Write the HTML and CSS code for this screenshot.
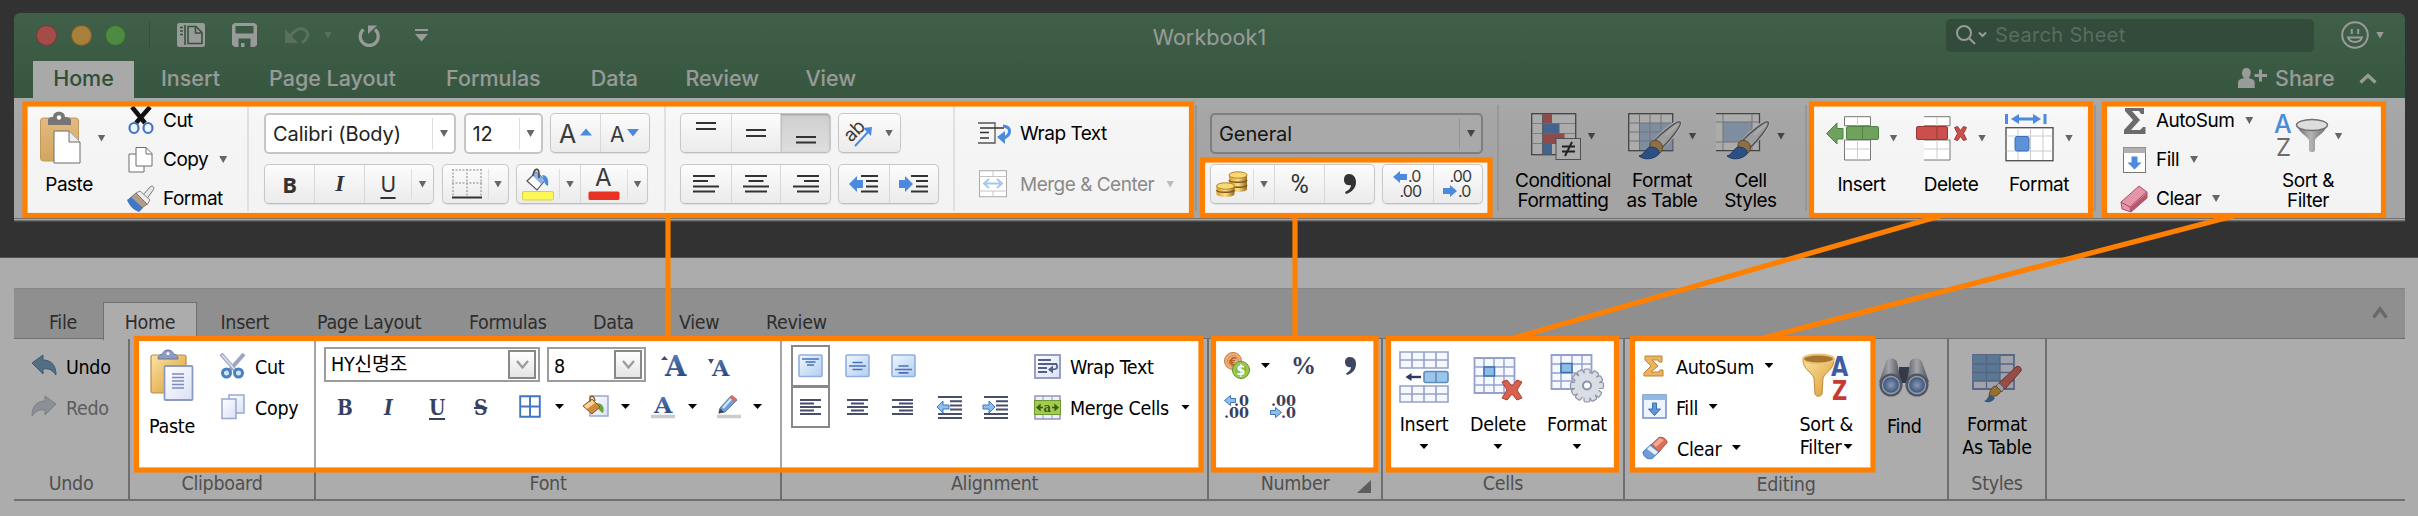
FILE: index.html
```html
<!DOCTYPE html>
<html lang="en">
<head>
<meta charset="utf-8">
<title>Workbook1</title>
<link rel="stylesheet" href="styles.css">
</head>
<body>
<svg class="defs" width="0" height="0" aria-hidden="true">
  <defs>
    <linearGradient id="tan" x1="0" y1="0" x2="0" y2="1"><stop offset="0" stop-color="#e3bb7e"/><stop offset="1" stop-color="#d2a560"/></linearGradient>
    <linearGradient id="gold" x1="0" y1="0" x2="1" y2="1"><stop offset="0" stop-color="#fbe3a0"/><stop offset="1" stop-color="#d99a32"/></linearGradient>
    <linearGradient id="coin" x1="0" y1="0" x2="1" y2="0"><stop offset="0" stop-color="#d79c28"/><stop offset=".5" stop-color="#fbe08a"/><stop offset="1" stop-color="#9c6a1c"/></linearGradient>
    <linearGradient id="sheet" x1="0" y1="0" x2="1" y2="1"><stop offset="0" stop-color="#ffffff"/><stop offset="1" stop-color="#d9e1f5"/></linearGradient>
    <linearGradient id="skyblue" x1="0" y1="0" x2="1" y2="1"><stop offset="0" stop-color="#eef6ff"/><stop offset="1" stop-color="#b3cff0"/></linearGradient>
    <linearGradient id="metal" x1="0" y1="0" x2="1" y2="0"><stop offset="0" stop-color="#8b8f9c"/><stop offset=".45" stop-color="#f3f5fa"/><stop offset="1" stop-color="#6c7186"/></linearGradient>
    <linearGradient id="funnel" x1="0" y1="0" x2="1" y2="0"><stop offset="0" stop-color="#6b6b6b"/><stop offset=".45" stop-color="#b4b4b4"/><stop offset="1" stop-color="#6b6b6b"/></linearGradient>
    <linearGradient id="navyA" x1="0" y1="0" x2="0" y2="1"><stop offset="0" stop-color="#5d86bd"/><stop offset="1" stop-color="#233e75"/></linearGradient>
    <radialGradient id="lens"><stop offset="0" stop-color="#cfe2ff"/><stop offset="1" stop-color="#4d78c0"/></radialGradient>
    <symbol id="brush" viewBox="0 0 44 40">
      <path d="M42 2C45 5 30 22 25 26L18 20C24 13 39 0 42 2Z" fill="#e8e8e8" stroke="#fff" stroke-width="4"/>
      <path d="M42 2C45 5 30 22 25 27L17 20C24 13 39 0 42 2Z" fill="#e9e9e9" stroke="#777" stroke-width="1.3"/>
      <path d="M28 15L40 4" stroke="#fff" stroke-width="2"/>
      <path d="M12 28C11 22 15 19 20 21C25 23 26 29 22 33Z" fill="#d2a566" stroke="#8c6a35"/>
      <path d="M1 36C6 35 8 28 12 27C18 27 22 30 21 34C15 40 6 40 1 36Z" fill="#4476c4" stroke="#2c5595"/>
    </symbol>
    <g id="teeth"><rect x="-3" y="-16.500" width="6" height="33" rx="1.500"/><rect x="-16.500" y="-3" width="33" height="6" rx="1.500"/></g>
  </defs>
</svg>

<section class="mac-stage">
  <div class="mac-window">
    <header class="mac-title">
      <div class="mac-title-left">
        <span class="light red"></span><span class="light amber"></span><span class="light green"></span>
        <span class="title-rule"></span>
        <svg width="28" height="24" viewBox="0 0 28 24"><rect width="28" height="24" rx="2.500" fill="#e2e6e3"/><path d="M8 2v20" stroke="#4f7d5c" stroke-width="1.600"/><path d="M3 4.500h3M3 8h3M3 11.500h3" stroke="#4f7d5c" stroke-width="1.600"/><path d="M11 3.500h8l6 6v11h-14z" fill="none" stroke="#4f7d5c" stroke-width="1.600"/><path d="M18.500 4v6h6" fill="none" stroke="#4f7d5c" stroke-width="1.600"/></svg>
        <svg width="25" height="24" viewBox="0 0 25 24"><path d="M2.500 0h20L25 2v20l-2.500 2h-20L0 21.500V2z" fill="#e2e6e3"/><path d="M3.500 3h18v7.500h-18z" fill="#588564"/><path d="M6.500 24v-8.500h12V24z" fill="#588564"/><path d="M9 24v-4h3.500v4z" fill="#e2e6e3"/></svg>
        <svg width="26" height="18" viewBox="0 0 26 18"><path d="M5 12C10 4 16 1 21 4C27 8 22 14 18 17" fill="none" stroke="#84a58f" stroke-width="3"/><path d="M1 3v14h13z" fill="#84a58f"/></svg>
        <i class="mtri faded"></i>
        <svg width="22" height="23" viewBox="0 0 22 23"><path d="M5.500 5.500A9 9 0 1 0 17 5.500" fill="none" stroke="#e2e6e3" stroke-width="3.200"/><path d="M10 10V1.500h9z" fill="#e2e6e3"/></svg>
        <svg width="13" height="13" viewBox="0 0 13 13"><path d="M0 1h13" stroke="#e2e6e3" stroke-width="2"/><path d="M0 5h13L6.500 12.500z" fill="#e2e6e3"/></svg>
      </div>
      <div class="mac-title-text">Workbook1</div>
      <div class="mac-title-right">
        <div class="search">
          <svg width="30" height="20" viewBox="0 0 30 20"><circle cx="8" cy="8" r="7" fill="none" stroke="#e2e6e3" stroke-width="2"/><path d="M13 13l6 6M23 7.500l3.500 3.500L30 7.500" fill="none" stroke="#e2e6e3" stroke-width="2"/></svg>
          <span>Search Sheet</span>
        </div>
        <svg width="28" height="28" viewBox="0 0 28 28" fill="none" stroke="#e2e6e3" stroke-width="2"><circle cx="14" cy="14" r="12.800"/><path d="M10.800 8v5M17.200 8v5M7 16.500c2 6 12 6 14 0z"/></svg>
        <i class="mtri pale"></i>
      </div>
    </header>
    <nav class="mac-tabs">
      <div class="mac-tab-list">
        <a class="active">Home</a><a>Insert</a><a>Page Layout</a><a>Formulas</a><a>Data</a><a>Review</a><a>View</a>
      </div>
      <div class="mac-share">
        <svg width="29" height="20" viewBox="0 0 29 20"><path d="M8.500 0c3 0 4.500 2 4.200 5c-.2 2-1 4-2 5c4 1 6 2 6 5v5H0v-5c0-3 2-4 6-5c-1-1-2-3-2-5C3.900 2 5.500 0 8.500 0z" fill="#e2e6e3"/><path d="M22.500 1.500v12M16.500 7.500h12.500" stroke="#e2e6e3" stroke-width="3"/></svg>
        <span>Share</span>
        <svg width="18" height="11" viewBox="0 0 18 11"><path d="M1.500 9.500L9 2.500l7.500 7" fill="none" stroke="#e2e6e3" stroke-width="3.200"/></svg>
      </div>
    </nav>

    <div class="mac-ribbon">
      <div class="mg mg-clip">
        <div class="big paste">
          <div class="pic"><svg width="41" height="52" viewBox="0 0 41 52"><rect x=".5" y="6" width="38" height="43" rx="3" fill="url(#tan)" stroke="#c3985a"/><path d="M8 13V8c0-2 2-3 5-3c0-7 12-7 12 0c3 0 6 1 6 3v5z" fill="#767676"/><circle cx="19" cy="5.500" r="2.200" fill="#fff"/><path d="M14 19h15l11 11v21H14z" fill="#fff" stroke="#6d6d6d"/><path d="M29 19v11h11" fill="#eee" stroke="#6d6d6d"/></svg><i class="mtri"></i></div>
          <span>Paste</span>
        </div>
        <div class="stack">
          <div class="line"><svg width="26" height="28" viewBox="0 0 26 28"><path d="M4 0l13 16M22 0L8 16" stroke="#111" stroke-width="4.500"/><ellipse cx="6" cy="21" rx="4.500" ry="5" fill="none" stroke="#3d76c8" stroke-width="2.200"/><ellipse cx="20" cy="21" rx="4.500" ry="5" fill="none" stroke="#3d76c8" stroke-width="2.200"/></svg><span>Cut</span></div>
          <div class="line"><svg width="26" height="26" viewBox="0 0 26 26"><path d="M1 7h9l6 6v12H1z" fill="#fff" stroke="#6d6d6d"/><path d="M8 .5h10l6 6V19H8z" fill="#fff" stroke="#6d6d6d"/><path d="M18 .5v6.500h6" fill="none" stroke="#6d6d6d"/></svg><span>Copy</span><i class="mtri"></i></div>
          <div class="line"><svg width="28" height="26" viewBox="0 0 28 26"><path d="M15 10L23 1c2-2 5 0 3.500 2.500L19 14z" fill="#e6e6e6" stroke="#777"/><path d="M9 7l4-2 10 9-3 5z" fill="#ececec" stroke="#888"/><path d="M3 12l6-5 11 11-5 4z" fill="#b39c88" stroke="#8a7361"/><path d="M0 14l4-3 12 11-4 4C6 24 2 19 0 14z" fill="#3f78c6"/></svg><span>Format</span></div>
        </div>
      </div>

      <div class="mg mg-font two">
        <div class="mrow font-a">
          <div class="combo"><span>Calibri (Body)</span><b></b><i class="mtri"></i></div>
          <div class="combo"><span>12</span><b></b><i class="mtri"></i></div>
          <div class="seg seg-size">
            <div><svg width="34" height="26" viewBox="0 0 34 26"><text class="ic" x="0" y="23" font-size="25">A</text><path d="M21 15.500l6-7 6 7z" fill="#4b8ade"/></svg></div>
            <div><svg width="30" height="26" viewBox="0 0 30 26"><text class="ic" x="0" y="22" font-size="21">A</text><path d="M17 9h12l-6 7.500z" fill="#4b8ade"/></svg></div>
          </div>
        </div>
        <div class="mrow font-b">
          <div class="seg seg-biu">
            <div class="g-b">B</div><div class="g-i">I</div><div class="g-u">U</div><div class="drop"><i class="mtri"></i></div>
          </div>
          <div class="seg seg-border">
            <div><svg width="30" height="30" viewBox="0 0 30 30"><path d="M1 0v27M29 0v27M15 0v27M0 1h30M0 14h30" stroke="#aaa" stroke-width="1.500" stroke-dasharray="2 1.500" fill="none"/><path d="M0 28.500h30" stroke="#333" stroke-width="2"/></svg></div>
            <div class="drop"><i class="mtri"></i></div>
          </div>
          <div class="seg seg-fill">
            <div><svg width="32" height="34" viewBox="0 0 32 34"><path d="M5 14L14 5l9 8-8 10z" fill="#fff" stroke="#555" stroke-width="1.200"/><path d="M10 8l9 9 4-4-9-8z" fill="#8ab2e8"/><path d="M11 9c1-8 6-9 6-2v4" fill="none" stroke="#444" stroke-width="1.600"/><path d="M20 8c5 0 7 4 6 11c-3-1-4-4-4-7z" fill="#4b8ade"/><rect x=".5" y="24.500" width="31" height="8.500" rx="1.500" fill="#fbf757" stroke="#d8d23c"/></svg></div>
            <div class="drop"><i class="mtri"></i></div>
            <div><svg width="32" height="34" viewBox="0 0 32 34"><text class="ic" x="7" y="19" font-size="24">A</text><rect x=".5" y="24.500" width="31" height="8.500" rx="1.500" fill="#e83323"/></svg></div>
            <div class="drop"><i class="mtri"></i></div>
          </div>
        </div>
      </div>

      <div class="mg mg-align two">
        <div class="mrow">
          <div class="seg seg-3">
            <div><svg width="22" height="26" viewBox="0 0 22 26"><path d="M1 3h20M1 9h20" stroke="#333" stroke-width="2"/></svg></div>
            <div><svg width="22" height="26" viewBox="0 0 22 26"><path d="M1 10h20M1 16h20" stroke="#333" stroke-width="2"/></svg></div>
            <div class="on"><svg width="22" height="26" viewBox="0 0 22 26"><path d="M1 17h20M1 22.500h20" stroke="#333" stroke-width="2"/></svg></div>
          </div>
          <div class="seg seg-ab">
            <div><svg width="32" height="28" viewBox="0 0 32 28"><text class="ic" x="0" y="0" font-size="19" transform="translate(8 24) rotate(-45)">ab</text><path d="M12 27L25 13" stroke="#4b8ade" stroke-width="2"/><path d="M20 9l9-1-1 9z" fill="#4b8ade"/></svg></div>
            <div class="drop"><i class="mtri"></i></div>
          </div>
        </div>
        <div class="mrow">
          <div class="seg seg-3">
            <div><svg width="26" height="18" viewBox="0 0 26 18"><path d="M0 1h22M0 6h15M0 11.500h26M0 16.500h22" stroke="#333" stroke-width="2"/></svg></div>
            <div><svg width="26" height="18" viewBox="0 0 26 18"><path d="M2 1h22M5.500 6h15M0 11.500h26M2 16.500h22" stroke="#333" stroke-width="2"/></svg></div>
            <div><svg width="26" height="18" viewBox="0 0 26 18"><path d="M4 1h22M11 6h15M0 11.500h26M4 16.500h22" stroke="#333" stroke-width="2"/></svg></div>
          </div>
          <div class="seg seg-indent">
            <div><svg width="30" height="18" viewBox="0 0 30 18"><path d="M12 1h17M17 6h12M17 11.500h12M12 16.500h17" stroke="#333" stroke-width="2"/><path d="M0 9l8-8v4h6v8H8v4z" fill="#4b8ade"/></svg></div>
            <div><svg width="30" height="18" viewBox="0 0 30 18"><path d="M12 1h17M17 6h12M17 11.500h12M12 16.500h17" stroke="#333" stroke-width="2"/><path d="M14 9L6 1v4H0v8h6v4z" fill="#4b8ade"/></svg></div>
          </div>
        </div>
      </div>

      <div class="mg mg-wrap two">
        <div class="mrow text-row"><svg width="34" height="22" viewBox="0 0 34 22"><path d="M0 1h17v20H0" fill="none" stroke="#555" stroke-width="1.300"/><path d="M2 6h24M2 10.500h9M2 16h9" stroke="#333" stroke-width="1.500"/><path d="M25 4c9 1 8 9 1 12" fill="none" stroke="#4b8ade" stroke-width="3"/><path d="M19 15l8-6v13z" fill="#4b8ade"/></svg><span>Wrap Text</span></div>
        <div class="mrow text-row off"><svg width="34" height="28" viewBox="0 0 34 28"><rect x="1.500" y=".7" width="27" height="26" fill="#fff" stroke="#aaa"/><path d="M1 6.500h28M1 21h28M15 1v5M15 21v6" stroke="#c4c4c4"/><path d="M8 13.500h14M11 9l-5 4.500 5 4.500M19 9l5 4.500-5 4.500" fill="none" stroke="#a9c6ec" stroke-width="2"/></svg><span>Merge &amp; Center</span><i class="mtri light-tri"></i></div>
      </div>

      <div class="mg mg-num two">
        <div class="mrow"><div class="combo wide"><span>General</span><b></b><i class="mtri"></i></div></div>
        <div class="mrow">
          <div class="seg seg-coin">
            <div><svg width="32" height="27" viewBox="0 0 32 27"><path d="M13 4v14c0 4 18 4 18 0V4z" fill="url(#coin)"/><path d="M13 9c0 3 18 3 18 0M13 14c0 3 18 3 18 0" fill="none" stroke="#7a5416" stroke-width="1.300"/><ellipse cx="22" cy="4" rx="9" ry="3.200" fill="#f7da77" stroke="#b58526"/><path d="M.5 15v8c0 4 18 4 18 0v-8z" fill="url(#coin)"/><path d="M.5 19c0 3 18 3 18 0" fill="none" stroke="#7a5416" stroke-width="1.300"/><ellipse cx="9.500" cy="15" rx="9" ry="3.200" fill="#f7da77" stroke="#b58526"/></svg></div>
            <div class="drop"><i class="mtri"></i></div>
            <div class="pct">%</div>
            <div><svg width="12" height="20" viewBox="0 0 12 20"><path d="M5 0c4 0 7 3 7 8c0 6-4 10-10 12l-1-2c4-2 6-4 6-7C2 12 0 9 0 6C0 2 2 0 5 0z" fill="#333"/></svg></div>
          </div>
          <div class="seg seg-dec">
            <div><svg width="30" height="28" viewBox="0 0 30 28"><text class="ic dec" x="15" y="12">.0</text><text class="ic dec" x="6.500" y="27">.00</text><path d="M0 7l7-6v3h7v6H7v3z" fill="#4b8ade"/></svg></div>
            <div><svg width="30" height="28" viewBox="0 0 30 28"><text class="ic dec" x="6.500" y="12">.00</text><text class="ic dec" x="15" y="27">.0</text><path d="M14 21l-7-6v3H0v6h7v3z" fill="#4b8ade"/></svg></div>
          </div>
        </div>
      </div>

      <div class="mg mg-styles">
        <div class="big w114">
          <div class="pic"><svg width="50" height="47" viewBox="0 0 50 47"><rect x=".7" y=".7" width="44" height="41" fill="#fff" stroke="#666" stroke-width="1.300"/><path d="M1 10.500h43M1 20.500h43M1 30.500h43" stroke="#bbb"/><path d="M11.500 1h9.500v9.500h-9.500zM11.500 20.500h22v10.500h-22z" fill="#d4706e"/><path d="M11.500 10.500h17v10h-17zM11.500 31h9.500v10.500h-9.500z" fill="#6795d2"/><path d="M11.500 1v41" stroke="#888"/><rect x="25" y="25.500" width="24.500" height="21" fill="#fff" stroke="#777"/><path d="M31 33.500h13M31 38.500h13M41 29l-7 14" stroke="#333" stroke-width="2"/></svg><i class="mtri"></i></div>
          <span>Conditional<br>Formatting</span>
        </div>
        <div class="big w84">
          <div class="pic"><svg width="54" height="47" viewBox="0 0 54 47"><rect x=".7" y=".7" width="44" height="37" fill="#fff" stroke="#666" stroke-width="1.300"/><rect x="11.500" y="10" width="33" height="27" fill="#bcd2ef"/><path d="M1 10h43M1 19h43M1 28h43M11.500 1v36M22 1v36M33 1v36" stroke="#aaa"/><use href="#brush" x="10" y="7" width="44" height="40"/></svg><i class="mtri"></i></div>
          <span>Format<br>as Table</span>
        </div>
        <div class="big w93">
          <div class="pic"><svg width="54" height="47" viewBox="0 0 54 47"><path d="M0 .7h43.500v37H0" fill="#fff" stroke="#666" stroke-width="1.300"/><rect x="7" y="9" width="29" height="20" fill="#bcd2ef"/><path d="M0 9h43M0 29h43M7 1v36M36 1v36" stroke="#aaa"/><use href="#brush" x="10" y="7" width="44" height="40"/></svg><i class="mtri"></i></div>
          <span>Cell<br>Styles</span>
        </div>
      </div>

      <div class="mg mg-cells">
        <div class="big w83">
          <div class="pic g11"><svg width="53" height="45" viewBox="0 0 53 45"><path d="M18.500.7h26v9h-26zM18.500 24h26v20h-26z" fill="#fff" stroke="#777"/><path d="M31.500 1v9M31.500 24v20M18.500 33h26" stroke="#ccc"/><rect x="20.500" y="10.500" width="32" height="13" rx="1.500" fill="#6fa35d" stroke="#4e8240"/><path d="M36.500 11v12" stroke="#4e8240"/><path d="M.5 17.500L11 7v5.500h6v10.500h-6V28z" fill="#6fa35d" stroke="#4e8240"/></svg><i class="mtri"></i></div>
          <span>Insert</span>
        </div>
        <div class="big w96">
          <div class="pic g11"><svg width="51" height="45" viewBox="0 0 51 45"><path d="M8 .7h26v9H8M8 24h26v20H8" fill="#fff" stroke="#777"/><path d="M21 1v9M21 24v20M8 33h26" stroke="#ccc"/><rect x=".5" y="10.500" width="31" height="13" rx="1.500" fill="#c9504d" stroke="#9f3532"/><path d="M21 11v12" stroke="#9f3532"/><path d="M38.500 11.500l3-1 3 4 3-4 3 1-3 6 3 6-3 1-3-4-3 4-3-1 3-6z" fill="#c9504d" stroke="#9f3532"/></svg><i class="mtri"></i></div>
          <span>Delete</span>
        </div>
        <div class="big w80">
          <div class="pic g11"><svg width="49" height="48" viewBox="0 0 49 48"><path d="M1.500 0v10M40 0v10" stroke="#4b8ade" stroke-width="3"/><path d="M6 5l8-5v3.500h14V0l8 5-8 5V6.500H14V10z" fill="#4b8ade"/><rect x="1" y="13.700" width="47" height="33" fill="#fff" stroke="#555" stroke-width="1.400"/><path d="M1.500 22h46M1.500 37h46M13 14v32M25.500 14v32M38 14v32" stroke="#ccc"/><rect x="10" y="22.500" width="14" height="14.500" rx="2" fill="#5b92d8" stroke="#3a6fb8"/></svg><i class="mtri"></i></div>
          <span>Format</span>
        </div>
      </div>

      <div class="mg mg-edit">
        <div class="stack">
          <div class="line"><svg width="26" height="28" viewBox="0 0 26 28"><path d="M4 1h19v6h-3l-2-3h-7l8 9-9 10h9l3-3h2.500v7H3v-4l9-10L4 4z" fill="#6b6b6b"/></svg><span>AutoSum</span><i class="mtri"></i></div>
          <div class="line"><svg width="26" height="26" viewBox="0 0 26 26"><rect x="2.500" y=".5" width="22" height="25" fill="#fff" stroke="#777"/><path d="M2.500.5h22v5.500h-22z" fill="#b0b0b0"/><path d="M10.500 9.500h6v6h4l-7 7-7-7h4z" fill="#4b8ade"/></svg><span>Fill</span><i class="mtri"></i></div>
          <div class="line"><svg width="28" height="28" viewBox="0 0 28 28"><path d="M19 1l8 6v6L11 27 2 24l-1-7z" fill="#e595a8" stroke="#a9506a"/><path d="M1 17l9 5 16.500-15M10 22l1 5" fill="none" stroke="#a9506a"/><path d="M11 22L27 8v5L11 27z" fill="#b5566f"/></svg><span>Clear</span><i class="mtri"></i></div>
        </div>
        <div class="big sort">
          <div class="pic"><svg width="54" height="44" viewBox="0 0 54 44"><text x="0" y="19" font-size="25" font-weight="500" fill="#4b8ade" font-family="Inter">A</text><text x="2" y="42" font-size="24" fill="#6b6b6b" font-family="Inter">Z</text><path d="M23 11c2 8 9 10 12 15v10c0 3 6 3 6 0V26c3-5 10-7 12-15z" fill="url(#funnel)"/><ellipse cx="38" cy="11" rx="15.500" ry="5.500" fill="#ddd" stroke="#707070" stroke-width="1.500"/></svg><i class="mtri"></i></div>
          <span>Sort &amp;<br>Filter</span>
        </div>
      </div>
    </div>
  </div>
</section>

<section class="win-stage">
  <nav class="win-tabs">
    <div class="win-tab-list"><a>File</a><a class="active">Home</a><a>Insert</a><a>Page Layout</a><a>Formulas</a><a>Data</a><a>View</a><a>Review</a></div>
    <svg width="16" height="13" viewBox="0 0 16 13"><path d="M1.500 11.500L8 3l6.500 8.500" fill="none" stroke="#9c9c9c" stroke-width="3.500"/></svg>
  </nav>
  <div class="win-ribbon">
    <div class="wg wg-undo">
      <div class="wbody"><div class="wstack">
        <div class="wline"><svg width="26" height="21" viewBox="0 0 26 21"><path d="M1 8L12 0v5c8 0 13 5 13 15c-4-5-7-7-13-6v5z" fill="#79a3c4" stroke="#5b86aa"/></svg><span>Undo</span></div>
        <div class="wline off"><svg width="26" height="21" viewBox="0 0 26 21"><path d="M25 8L14 0v5C6 5 1 10 1 20c4-5 7-7 13-6v5z" fill="#cdd6de" stroke="#b2bfca"/></svg><span>Redo</span></div>
      </div></div>
      <div class="wlabel">Undo</div>
    </div>

    <div class="wg wg-clip">
      <div class="wbody">
        <div class="wbig">
          <div class="wpic"><svg width="44" height="52" viewBox="0 0 44 52"><rect x="1" y="5" width="35" height="38" rx="2" fill="url(#gold)" stroke="#b98a4a" stroke-width="1.200"/><path d="M8 9C8 4 12 5 13 3c1-4 9-4 10 0c1 2 5 1 5 6z" fill="#8c9cc4" stroke="#66759e"/><circle cx="18" cy="3.500" r="1.500" fill="#fff"/><rect x="14.500" y="16" width="28" height="34" rx="1" fill="url(#sheet)" stroke="#8c9ac8" stroke-width="1.800"/><path d="M22 24h12M22 27.500h12M22 31h12M22 34.500h12M22 38h12" stroke="#7d8cba" stroke-width="1.500"/></svg></div>
          <span class="single">Paste</span>
        </div>
        <div class="wstack">
          <div class="wline"><svg width="26" height="26" viewBox="0 0 26 26"><path d="M1 1l15 17M24 1L9 18" stroke="#9aa6c2" stroke-width="4"/><path d="M2 2l14 16" stroke="#e4e9f4" stroke-width="1.300"/><circle cx="6.500" cy="20" r="4" fill="#cfe3f8" stroke="#4a7fc0" stroke-width="3"/><circle cx="18.500" cy="20" r="4" fill="#cfe3f8" stroke="#4a7fc0" stroke-width="3"/></svg><span>Cut</span></div>
          <div class="wline"><svg width="26" height="26" viewBox="0 0 26 26"><rect x="9" y="1" width="15" height="18" fill="url(#sheet)" stroke="#9aa7d0" stroke-width="1.500"/><rect x="2" y="5" width="14" height="19.500" fill="url(#sheet)" stroke="#9aa7d0" stroke-width="1.500"/></svg><span>Copy</span></div>
        </div>
      </div>
      <div class="wlabel">Clipboard</div>
    </div>

    <div class="wg wg-font">
      <div class="wrows">
        <div class="wrow wfont-a">
          <div class="wcombo"><span class="kr">HY신명조</span><b><svg width="13" height="9" viewBox="0 0 13 9"><path d="M1 1l5.500 6.500L12 1" fill="none" stroke="#999" stroke-width="2.200"/></svg></b></div>
          <div class="wcombo"><span>8</span><b><svg width="13" height="9" viewBox="0 0 13 9"><path d="M1 1l5.500 6.500L12 1" fill="none" stroke="#999" stroke-width="2.200"/></svg></b></div>
          <svg width="26" height="24" viewBox="0 0 26 24"><text class="serif" x="4" y="21.500" font-size="27" textLength="21" lengthAdjust="spacingAndGlyphs" fill="url(#navyA)">A</text><path d="M0 6l3.500-4L7 6z" fill="#444c66"/></svg>
          <svg width="26" height="24" viewBox="0 0 26 24"><text class="serif" x="4" y="21.500" font-size="23" textLength="17" lengthAdjust="spacingAndGlyphs" fill="url(#navyA)">A</text><path d="M0 5h6l-3 5z" fill="#444c66"/></svg>
        </div>
        <div class="wrow wfont-b">
          <span class="sg">B</span><span class="sg it">I</span><span class="sg un">U</span><span class="sg st">S</span>
          <svg width="22" height="23" viewBox="0 0 22 23"><path d="M1.200 1.200h19.600v20.600H1.200zM11 1v21M1 11.500h20" fill="none" stroke="#3f76c4" stroke-width="1.900"/></svg>
          <i class="wtri"></i>
          <svg width="26" height="24" viewBox="0 0 26 24"><rect x="7" y="1" width="18" height="20" fill="url(#sheet)" stroke="#9aa7d0" stroke-width="1.500"/><path d="M13 8c7 0 9 5 7 10c-3-1-4-4-6-6z" fill="#6da33d"/><path d="M0 11L9 4l8 8-8 7z" fill="#d08a3c" stroke="#8a5a2a"/><path d="M1 11l8-6 3 3-8 6z" fill="#f6d798"/><path d="M7 7c-1-7 4-8 5-1" fill="none" stroke="#8a5a2a" stroke-width="1.400"/></svg>
          <i class="wtri"></i>
          <svg width="24" height="24" viewBox="0 0 24 24"><text class="serif" x="3" y="18" font-size="23" textLength="18" lengthAdjust="spacingAndGlyphs" fill="url(#navyA)">A</text><path d="M0 21.500h24" stroke="#ccc" stroke-width="3.500"/></svg>
          <i class="wtri"></i>
          <svg width="24" height="24" viewBox="0 0 24 24"><path d="M0 21.500h24" stroke="#ccc" stroke-width="3.500"/><path d="M3 13L14 1l6 4L8 17l-6 1z" fill="#6f9fd8" stroke="#5877a6"/><path d="M12.500 2.500L15 0l5 4-2 3z" fill="#e06a5c"/><path d="M1.500 18.500l1.500-5 4 3.500z" fill="#444"/><path d="M6 13l8-9" stroke="#d7e7fb" stroke-width="2"/></svg>
          <i class="wtri"></i>
        </div>
      </div>
      <div class="wlabel">Font</div>
    </div>

    <div class="wg wg-align">
      <div class="wrows">
        <div class="wrow walign-a">
          <div class="tog"><svg width="25" height="24" viewBox="0 0 25 24"><rect x="1" y="1" width="23" height="21.500" rx="1" fill="url(#skyblue)" stroke="#8fb0e0" stroke-width="1.600"/><path d="M4 5h17M7.500 8h10M9 11h7" stroke="#4872b8" stroke-width="1.700"/></svg></div>
          <svg width="25" height="24" viewBox="0 0 25 24"><rect x="1" y="1" width="23" height="21.500" rx="1" fill="url(#skyblue)" stroke="#8fb0e0" stroke-width="1.600"/><path d="M7.500 8.500h10M4 12h17M7.500 15.500h10" stroke="#4872b8" stroke-width="1.700"/></svg>
          <svg width="25" height="24" viewBox="0 0 25 24"><rect x="1" y="1" width="23" height="21.500" rx="1" fill="url(#skyblue)" stroke="#8fb0e0" stroke-width="1.600"/><path d="M7.500 12h10M4 15.500h17M7.500 18.800h10" stroke="#4872b8" stroke-width="1.700"/></svg>
          <svg width="27" height="25" viewBox="0 0 27 25"><rect x="1" y="1" width="25" height="23" fill="url(#sheet)" stroke="#8c96bd" stroke-width="1.800"/><path d="M4 6h13M4 10h19M4 14h9M4 18h9" stroke="#535f88" stroke-width="1.800"/><path d="M22.500 10c2 5-1 5.500-5 5.500" fill="none" stroke="#535f88" stroke-width="1.800"/><path d="M19 11.500v8l-5-4z" fill="#535f88"/></svg>
          <span>Wrap Text</span>
        </div>
        <div class="wrow walign-b">
          <div class="tog"><svg width="21" height="18" viewBox="0 0 21 18" stroke="#474f6a" stroke-width="2"><path d="M0 2h21M0 5.500h14M0 9h21M0 12.500h14M0 16h21"/></svg></div>
          <svg width="21" height="18" viewBox="0 0 21 18" stroke="#474f6a" stroke-width="2"><path d="M0 2h21M4 5.500h13M0 9h21M4 12.500h13M0 16h21"/></svg>
          <svg width="21" height="18" viewBox="0 0 21 18" stroke="#474f6a" stroke-width="2"><path d="M0 2h21M7 5.500h14M0 9h21M7 12.500h14M0 16h21"/></svg>
          <svg width="26" height="25" viewBox="0 0 26 25"><path d="M1 2h24M13 6.200h12M13 10.400h12M13 14.600h12M1 19h24M1 23h24" stroke="#474f6a" stroke-width="2"/><path d="M0 12l6-6v4h6v4H6v4z" fill="#8ec0ee" stroke="#3f76b8"/></svg>
          <svg width="26" height="25" viewBox="0 0 26 25"><path d="M1 2h24M13 6.200h12M13 10.400h12M13 14.600h12M1 19h24M1 23h24" stroke="#474f6a" stroke-width="2"/><path d="M12 12L6 6v4H0v4h6v4z" fill="#8ec0ee" stroke="#3f76b8"/></svg>
          <svg width="27" height="25" viewBox="0 0 27 25"><rect x="1" y="1" width="25" height="23" fill="#eef1fa" stroke="#8c96bd" stroke-width="1.500"/><path d="M9 1v23M18 1v23" stroke="#8c96bd"/><rect x=".5" y="5.500" width="26" height="14" fill="#a3cc4b" stroke="#6e9830"/><path d="M3 12.500h6M18 12.500h6M3 12.500l3-2.500v5zM24 12.500l-3-2.500v5z" stroke="#3c5a1c" stroke-width="1.300" fill="#3c5a1c"/><text x="9.500" y="16.500" font-size="13" font-weight="700" font-family="DejaVu Serif" fill="#3c5a1c">a</text></svg>
          <span>Merge Cells</span>
          <i class="wtri"></i>
        </div>
      </div>
      <div class="wlabel">Alignment</div>
    </div>

    <div class="wg wg-num">
      <div class="wrows">
        <div class="wrow wnum-a">
          <svg width="26" height="27" viewBox="0 0 26 27"><circle cx="9" cy="9" r="8.500" fill="#efb27c" stroke="#c07a42"/><circle cx="9" cy="9" r="5.500" fill="none" stroke="#d38c52"/><text x="5" y="14" font-size="13" font-weight="700" font-family="DejaVu Sans" fill="#b5632b">€</text><circle cx="17" cy="18" r="8.500" fill="#9ccc4f" stroke="#5f8f2c"/><circle cx="17" cy="18" r="6" fill="#8abd3f"/><text x="12.500" y="23" font-size="14" font-weight="700" font-family="DejaVu Sans" fill="#fff">$</text></svg>
          <i class="wtri"></i>
          <span class="wpct">%</span>
          <svg width="11" height="18" viewBox="0 0 11 18"><path d="M5 0c4 0 6 3 6 7c0 5-3 9-9 11l-1-1.500c3-2 5-4 5-6.500C2 11 0 8 0 5C0 2 2 0 5 0z" fill="#3d4763"/></svg>
        </div>
        <div class="wrow wnum-b">
          <svg width="27" height="26" viewBox="0 0 27 26"><text class="wdec" x="10" y="12" textLength="15" lengthAdjust="spacingAndGlyphs">.0</text><text class="wdec" x="0" y="24" textLength="25" lengthAdjust="spacingAndGlyphs">.00</text><path d="M.5 6.500l6-5v3h5v4h-5v3z" fill="#8ec0ee" stroke="#3f76b8"/></svg>
          <svg width="27" height="26" viewBox="0 0 27 26"><text class="wdec" x="1" y="12" textLength="25" lengthAdjust="spacingAndGlyphs">.00</text><text class="wdec" x="11" y="24" textLength="15" lengthAdjust="spacingAndGlyphs">.0</text><path d="M11.500 18.500l-6-5v3h-5v4h5v3z" fill="#8ec0ee" stroke="#3f76b8"/></svg>
        </div>
      </div>
      <div class="wlabel">Number<svg class="launcher" width="14" height="13" viewBox="0 0 14 13"><path d="M14 0v13H0z" fill="#8a8a8a"/></svg></div>
    </div>

    <div class="wg wg-cells">
      <div class="wbody">
        <div class="wbig"><div class="wpic"><svg width="50" height="53" viewBox="0 0 50 53" stroke="#95a1ca" stroke-width="1.600"><path d="M1 2h48v16H1zM1 36h48v16H1z" fill="#f5f8ff"/><path d="M1 10h48M13 2v16M25 2v16M37 2v16M1 44h48M13 36v16M25 36v16M37 36v16" fill="none"/><rect x="25" y="21.500" width="24" height="11" rx="2" fill="#9cc5ec" stroke="#5d8cc0"/><path d="M37 22v10" stroke="#5d8cc0"/><path d="M11 27h11" stroke="#2f3a5e" stroke-width="2.400"/><path d="M6.500 27l6-4v8z" fill="#2f3a5e" stroke="none"/></svg></div><span>Insert<br><i class="wtri"></i></span></div>
        <div class="wbig"><div class="wpic"><svg width="50" height="53" viewBox="0 0 50 53"><path d="M1.500 8h40v35h-40z" fill="#f5f8ff" stroke="#95a1ca" stroke-width="1.800"/><path d="M1.500 17h40M1.500 26h40M1.500 35h40M11 8v35M21 8v35M31 8v35" stroke="#95a1ca" stroke-width="1.400"/><rect x="11" y="17" width="10.500" height="9" fill="#8cbce8" stroke="#3f6fae" stroke-width="1.500"/><path d="M29 32l5-2 5 6 5-6 5 2-5 8 5 8-5 2-5-6-5 6-5-2 5-8z" fill="#d9604e" stroke="#b23c2e"/></svg></div><span>Delete<br><i class="wtri"></i></span></div>
        <div class="wbig"><div class="wpic"><svg width="54" height="53" viewBox="0 0 54 53"><path d="M1.500 5h40v34h-40z" fill="#f5f8ff" stroke="#95a1ca" stroke-width="1.800"/><path d="M1.500 14h40M1.500 23h40M1.500 31h40M11 5v34M22 5v34M32 5v34" stroke="#95a1ca" stroke-width="1.400"/><rect x="11" y="13.500" width="11" height="9" fill="#8cbce8" stroke="#3f6fae" stroke-width="1.500"/><g transform="translate(37 35.500)"><g fill="#d9dde5" stroke="#8b92a2" stroke-width="1.200"><use href="#teeth"/><use href="#teeth" transform="rotate(36)"/><use href="#teeth" transform="rotate(63)"/></g><circle r="12.500" fill="#d9dde5"/><circle r="4" fill="#fff" stroke="#8b92a2" stroke-width="2"/></g></svg></div><span>Format<br><i class="wtri"></i></span></div>
      </div>
      <div class="wlabel">Cells</div>
    </div>

    <div class="wg wg-edit">
      <div class="wbody">
        <div class="wstack">
          <div class="wline"><svg width="25" height="22" viewBox="0 0 25 22"><path d="M3 1h17v6h-3l-1-2h-6l6 6-7 6h8l1-2h3v6H2v-3l7-7-6-6z" fill="#eab45e" stroke="#bd833a"/></svg><span>AutoSum</span><i class="wtri"></i></div>
          <div class="wline"><svg width="25" height="25" viewBox="0 0 25 25"><rect x="1" y="1" width="23" height="23" fill="#eef4fd" stroke="#7d92c8" stroke-width="1.600"/><path d="M1 1h23v5H1z" fill="#8dbbe8"/><path d="M10.500 9h4v6h4l-6 6.500-6-6.500h4z" fill="#5f96d8" stroke="#3b6cab"/></svg><span>Fill</span><i class="wtri"></i></div>
          <div class="wline"><svg width="26" height="24" viewBox="0 0 26 24"><path d="M9 9L17 1.500c4-1 8 2 8 5L17 16z" fill="#dd6d58" stroke="#a8503f"/><path d="M1 16l8-7.500 8 7.500-7 6.500C5 24 1 20 1 16z" fill="#6a9edb" stroke="#4a78b0"/><path d="M5 13l3-3 8 6-3 3z" fill="#e8eef6"/><path d="M11 8l7-6 4 2-8 7z" fill="#f0a898"/></svg><span>Clear</span><i class="wtri"></i></div>
        </div>
        <div class="wbig wsort"><div class="wpic"><svg width="48" height="53" viewBox="0 0 48 53"><path d="M1 9c0 11 8 12 11 19l1 16c1 3 6 3 7 0l1-16c3-7 11-8 11-19z" fill="url(#gold)" stroke="#c08a35"/><ellipse cx="16.500" cy="9" rx="15.500" ry="4.500" fill="#a9762f" stroke="#eac477" stroke-width="2"/><text x="29" y="26" font-size="27" font-weight="700" textLength="17" lengthAdjust="spacingAndGlyphs" font-family="DejaVu Sans" fill="#3f5aa6">A</text><text x="30" y="50" font-size="27" font-weight="700" textLength="15" lengthAdjust="spacingAndGlyphs" font-family="DejaVu Sans" fill="#c63a33">Z</text></svg></div><span>Sort &amp;<br>Filter <i class="wtri tight"></i></span></div>
        <div class="wbig wfind"><div class="wpic"><svg width="50" height="53" viewBox="0 0 50 53"><rect x="20" y="17" width="10" height="16" fill="#4f566e"/><path d="M7 12c1-5 9-5 11 0l4 20H0z" fill="url(#metal)"/><path d="M31 12c2-5 10-5 12 0l7 20H28z" fill="url(#metal)"/><circle cx="12" cy="35" r="11.500" fill="#777e93"/><circle cx="38" cy="35" r="11.500" fill="#777e93"/><circle cx="12" cy="35" r="8.500" fill="url(#lens)" stroke="#e2e8f4" stroke-width="1.300"/><circle cx="38" cy="35" r="8.500" fill="url(#lens)" stroke="#e2e8f4" stroke-width="1.300"/></svg></div><span class="single">Find</span></div>
      </div>
      <div class="wlabel">Editing</div>
    </div>

    <div class="wg wg-styles">
      <div class="wbody"><div class="wbig"><div class="wpic"><svg width="50" height="53" viewBox="0 0 50 53"><path d="M1 5h41v34H1z" fill="#eef2fb" stroke="#8796c6" stroke-width="1.800"/><path d="M1 5h27v26H1z" fill="#86b2da"/><path d="M1 14h41M1 22.500h41M1 31h41M14.500 5v34M28 5v34" stroke="#8095c4" stroke-width="1.300"/><path d="M26 34L44 17c3-2 6 1 5 4L33 39z" fill="#e0736a" stroke="#9c463f"/><path d="M24 36l3-3 5 5-2 4z" fill="#e6ecf5" stroke="#8b92a2"/><path d="M17 46c1-7 4-10 7-10l5 5c-3 5-6 6-12 5z" fill="#e0a648" stroke="#94672a"/><path d="M12 51c4-1 3-5 7-6l4 3c-3 5-8 5-11 3z" fill="#4d83bd"/></svg></div><span>Format<br>As Table</span></div></div>
      <div class="wlabel">Styles</div>
    </div>
  </div>
</section>

<svg class="callouts" width="2418" height="516" viewBox="0 0 2418 516">
  <path class="dim" fill-rule="evenodd" d="M0 0H2418V516H0ZM25 104V215.500H1191.500V104ZM1202.500 160V215.500H1490V160ZM1811.500 104V215.500H2090.500V104ZM2104.500 104V215.500H2383.500V104ZM136.500 338.500V470H1201V338.500ZM1213.500 338.500V470H1376V338.500ZM1388.500 338.500V470H1616.500V338.500ZM1632.500 338.500V470H1873V338.500Z"/>
  <g class="marks">
    <rect x="25" y="104" width="1166.500" height="111.500"/>
    <rect x="1202.500" y="160" width="287.500" height="55.500"/>
    <rect x="1811.500" y="104" width="279" height="111.500"/>
    <rect x="2104.500" y="104" width="279" height="111.500"/>
    <rect x="136.500" y="338.500" width="1064.500" height="131.500"/>
    <rect x="1213.500" y="338.500" width="162.500" height="131.500"/>
    <rect x="1388.500" y="338.500" width="228" height="131.500"/>
    <rect x="1632.500" y="338.500" width="240.500" height="131.500"/>
    <path d="M668 216V338M1295 216V338M1940 216L1514 338M2233.500 216L1763.500 338"/>
  </g>
</svg>
</body>
</html>
```
FILE: styles.css
```css
* { box-sizing: border-box; }
body { margin: 0; width: 2418px; height: 516px; overflow: hidden; position: relative; background: #fff; }
svg { display: block; flex: none; overflow: visible; }
.defs { position: absolute; }

/* annotation layer */
.callouts { position: absolute; left: 0; top: 0; }
.dim { fill: #000; fill-opacity: .325; }
.marks { fill: none; stroke: #ff8000; stroke-width: 5.2; }

/* mac window */
.mac-stage { height: 257px; padding: 13px 13px 0 14px; background: #4b4b4b; font-family: Inter, "Liberation Sans", sans-serif; }
.mac-window { height: 208.5px; border-radius: 6px 6px 0 0; overflow: hidden; background: linear-gradient(#5f8e6c, #52805e 85px); color: #000; }
.mac-title { display: grid; grid-template-columns: 1fr auto 1fr; height: 48px; }
.mac-title-left { display: grid; grid-template-columns: 34.5px 34.5px 44px 28px 55px 52px 40px 34px 57px 20px; padding: 0 0 4px 22px; align-items: center; }
.light { width: 21px; height: 21px; border-radius: 50%; border: 1px solid rgba(0,0,0,.25); }
.red { background: #f5716b; } .amber { background: #f8bf58; } .green { background: #73cd62; }
.title-rule { width: 1px; height: 27px; background: #4d7658; }
.mac-title-text { color: #e2e6e3; font-size: 21.5px; line-height: 48px; letter-spacing: .1px; }
.mac-title-right { display: grid; grid-template-columns: 395px 35px 9px; justify-content: end; align-items: center; padding: 0 20px 4px 0; }
.search { width: 368px; height: 33px; border-radius: 5px; background: #4a7056; display: flex; align-items: center; gap: 9px; padding-left: 10px; font-size: 20px; color: #84a18c; letter-spacing: .35px; }
.mac-tabs { height: 37px; display: flex; justify-content: space-between; }
.mac-tab-list { display: grid; grid-template-columns: 128px 108px 177px 144.7px 94.7px 120px 80px; padding-left: 19px; font-size: 21.5px; font-weight: 500; line-height: 34px; color: #e0e5e1; white-space: nowrap; }
.mac-tab-list .active { width: 101px; background: #fbfbfb; color: #467553; text-align: center; }
.mac-share { display: grid; grid-template-columns: 37px 84px 18px; align-items: center; padding: 0 28px 3px 0; color: #e2e6e3; font-size: 21.5px; font-weight: 500; }

.mac-ribbon { height: 123px; display: flex; background: linear-gradient(#fafafa, #f5f5f5 28px, #f3f3f3); border-bottom: 3px double #a5a5a5; font-size: 19px; letter-spacing: -.5px; }
.mg { display: flex; height: 106px; margin-top: 7px; padding-top: 3px; border-right: 2px solid #e0e0e0; flex: none; }
.mg:last-child { border-right: 0; }
.mg-clip { width: 235px; padding-left: 21px; } .mg-font { width: 417px; padding-left: 15px; }
.mg-align { width: 289px; padding-left: 14px; } .mg-wrap { width: 242px; padding-left: 22px; }
.mg-num { width: 302px; padding-left: 13px; } .mg-styles { width: 308px; padding-left: 7px; }
.mg-cells { width: 289px; padding-left: 13px; } .mg-edit { width: 308px; padding-left: 24px; }
.two { flex-direction: column; gap: 11px; padding-top: 8px; }
.mrow { display: flex; height: 40px; }
.big { display: flex; flex-direction: column; gap: 7px; align-items: center; text-align: center; line-height: 20px; white-space: nowrap; }
.pic { height: 60px; display: flex; align-items: center; gap: 7px; }
.g11 { gap: 11px; }
.w114 { width: 114px; } .w84 { width: 84px; } .w93 { width: 93px; } .w83 { width: 83px; } .w96 { width: 96px; } .w80 { width: 80px; }
.paste { width: 75px; } .paste .pic { gap: 17px; } .paste > span { margin-right: 7px; }
.stack { display: grid; grid-auto-rows: 39px; margin-top: -7px; white-space: nowrap; }
.line { display: flex; align-items: center; }
.line span { margin-right: 11px; }
.mg-clip .stack { margin-left: 17px; }
.line svg { width: 28px; margin-right: 8px; }
.mg-edit .stack { width: 146px; }
.sort { width: 84px; }
.mtri { width: 8px; height: 7px; background: #666; clip-path: polygon(0 0, 100% 0, 50% 100%); flex: none; }
.faded { background: #84a58f; } .pale { background: #e2e6e3; } .light-tri { background: #bbb; }

.combo { height: 41px; border: 2px solid #c6c6c6; border-radius: 5px; background: #fff; display: flex; align-items: center; font-size: 20px; letter-spacing: -.1px; color: #222; padding: 0 6px 0 7px; }
.combo span { flex: 1; white-space: nowrap; }
.combo b { width: 1px; height: 31px; background: #ddd; margin-right: 7px; }
.combo.wide { width: 273px; background: #fbfbfb; border-color: #bbb; }
.font-a { display: grid; grid-template-columns: 192px 79px 100px; column-gap: 7.5px; }
.font-b { display: grid; grid-template-columns: 170px 67px 132px; column-gap: 7.5px; }
.seg { display: grid; flex: none; height: 40px; border: 1.5px solid #c8c8c8; border-bottom-color: #bdbdbd; border-radius: 5px; background: linear-gradient(#fcfcfc, #ebebeb); color: #333; box-shadow: 0 1px 1px rgba(0,0,0,.08); }
.seg > div { display: flex; align-items: center; justify-content: center; border-left: 1px solid #d8d8d8; }
.seg > div:first-child { border-left: 0; }
.seg > .drop { margin: 4px 0; border-left-color: #ddd; }
.seg-size { grid-template-columns: 1fr 1fr; }
.seg-biu { grid-template-columns: 49px 50px 47px 1fr; }
.seg-border { grid-template-columns: 1fr 20px; padding-left: 4px; }
.seg-fill { grid-template-columns: 1fr 21px 47px 20px; }
.seg-3 { width: 151px; grid-template-columns: 1fr 1fr 1fr; }
.seg-ab { width: 63px; grid-template-columns: 1fr 22px; margin-left: 7px; }
.seg-ab .drop { border: 0; }
.seg-indent { width: 101px; grid-template-columns: 1fr 1fr; margin-left: 7px; }
.seg-coin { width: 165px; grid-template-columns: 42px 21px 50px 1fr; }
.seg-dec { width: 101px; grid-template-columns: 1fr 1fr; margin-left: 7px; }
.seg > .on { background: linear-gradient(#cfcfcf, #dedede); box-shadow: inset 0 1px 2px #999; border-radius: 0 4px 4px 0; }
.ic { font-family: Inter, sans-serif; fill: #3a3a3a; }
.dec { font-size: 16px; letter-spacing: -.9px; }
.g-b { font: 700 22px "Open Sans", sans-serif; }
.g-i { font: italic 700 23px "Liberation Serif", serif; }
.g-u { font: 400 21px Inter, sans-serif; text-decoration: underline; text-underline-offset: 5px; }
.pct { font: 400 25px Roboto, sans-serif; }
.text-row { align-items: center; }
.text-row svg { margin: 0 8px 0 1px; }
.text-row span { white-space: nowrap; }
.text-row .mtri { margin-left: 12px; }
.off { color: #8a8a8a; }

/* web ribbon */
.win-stage { height: 259px; padding: 30px 13px 0 14px; border-top: 1px solid #777; background: #fff; font-family: "DejaVu Sans Condensed", "DejaVu Sans", sans-serif; font-stretch: condensed; font-size: 19.5px; letter-spacing: -.3px; color: #000; }
.win-tabs { height: 51px; display: flex; justify-content: space-between; background: #d4d4d4; border-top: 1px solid #c8c8c8; border-bottom: 1px solid #a5a5a5; padding-right: 17px; }
.win-tabs > svg { margin-top: 17px; }
.win-tab-list { display: grid; grid-template-columns: 54px 117.5px 96.5px 152px 124px 86px 87px 80px; padding: 13px 0 0 35px; line-height: 42px; color: #444; white-space: nowrap; }
.win-tab-list .active { width: 94px; height: 38px; background: #fff; border: 1.5px solid #a5a5a5; border-bottom: 0; text-align: center; line-height: 40px; }
.win-ribbon { height: 162px; display: flex; border-bottom: 2px solid #a5a5a5; }
.wg { display: flex; flex-direction: column; flex: none; border-right: 2px solid #a5a5a5; padding-top: 6px; white-space: nowrap; }
.wg-undo { width: 116px; } .wg-clip { width: 186px; } .wg-font { width: 466px; } .wg-align { width: 427px; }
.wg-num { width: 174px; } .wg-cells { width: 242px; } .wg-edit { width: 324px; } .wg-styles { width: 98px; }
.wbody { display: flex; height: 123px; }
.wrows { height: 123px; }
.wrow { display: grid; height: 41px; align-items: center; }
.wrow > span { padding-top: 3px; }
.wlabel { display: flex; justify-content: center; line-height: 30px; color: #777; position: relative; padding-top: 2px; }
.launcher { position: absolute; right: 10px; bottom: 6px; }
.wstack { display: grid; grid-auto-rows: 41px; }
.wline { display: flex; align-items: center; gap: 10.5px; }
.wline svg { margin-right: -1.5px; }
.wline span { padding-top: 3px; }
.wtri { display: inline-block; width: 9px; height: 5px; background: #000; clip-path: polygon(0 0, 100% 0, 50% 100%); flex: none; }
.wbig { display: flex; flex-direction: column; align-items: center; text-align: center; line-height: 23px; }
.wbig .wpic { height: 68px; padding-top: 5px; }
.wbig .wtri { vertical-align: 5px; }
.single { padding-top: 2px; }
.wg-undo .wbody { padding-left: 17px; }
.wg-clip .wbody { padding-left: 18px; gap: 24px; }
.wg-clip .wbig { width: 48px; }
.wfont-a { grid-template-columns: 223px 114px 47px 30px; padding-left: 8px; }
.wfont-b { grid-template-columns: 47px 45px 45px 45px 36px 28px 38px 30px 37px 29px 36px 10px; padding-left: 21px; }
.wcombo { width: 216px; height: 35px; border: 2px solid #9c9c9c; display: flex; align-items: center; justify-content: space-between; padding: 0 2px 0 5px; margin-top: -2px; }
.wcombo:nth-child(2) { width: 99px; }
.wcombo b { width: 28px; height: 29px; border: 2px solid #888; background: linear-gradient(#fff, #e4e4e4); display: flex; align-items: center; justify-content: center; }
.wcombo span { padding-top: 3px; }
.wcombo .kr { font-family: "DejaVu Sans Condensed", "Noto Sans CJK KR", sans-serif; line-height: 24px; padding-top: 0; }
.serif { font-family: "DejaVu Serif", serif; font-weight: 700; }
.wrow > .sg { font: 700 22px "DejaVu Serif", serif; color: #37415f; line-height: 30px; transform: scaleX(.85); transform-origin: left; padding: 0; }
.wrow > .it { font-style: italic; } .un { text-decoration: underline; text-underline-offset: 3px; } .st { text-decoration: line-through; }
.walign-a { grid-template-columns: 54px 46px 143px 36px auto; padding-left: 9px; }
.walign-b { grid-template-columns: 56px 45px 45px 46px 51px 36px 111px auto; padding-left: 9px; }
.tog { width: 39px; height: 42px; border: 2px solid #888; display: flex; align-items: center; justify-content: center; }
.wnum-a { grid-template-columns: 37px 30px 54px 12px; padding-left: 15px; }
.wnum-b { grid-template-columns: 46px 30px; padding-left: 15px; }
.wrow > .wpct { font: 700 25px "Liberation Serif", serif; color: #37415f; padding: 0; }
.wdec { font: 700 14px "DejaVu Serif", serif; fill: #37415f; letter-spacing: 0; }
.wg-cells .wbody { padding-left: 12px; }
.wg-cells .wbig:nth-child(1) { width: 58px; } .wg-cells .wbig:nth-child(2) { width: 90px; } .wg-cells .wbig:nth-child(3) { width: 68px; }
.wg-edit .wbody { padding-left: 17px; }
.wg-edit .wstack { width: 150px; }
.wsort { width: 72px; } .wfind { width: 86px; }
.tight { margin-left: -3px; }
.wg-styles .wbig { width: 96px; }
```
